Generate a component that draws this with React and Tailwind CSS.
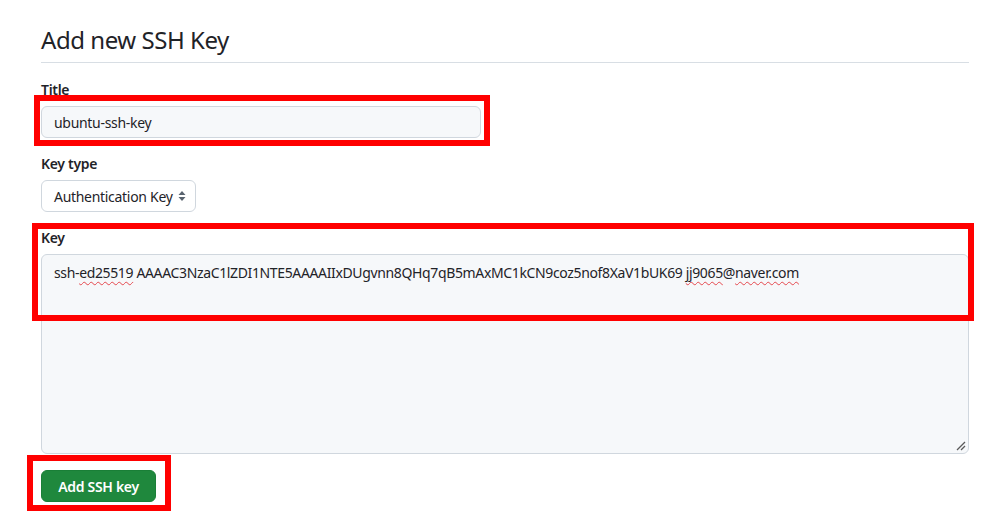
import React from 'react';

function SelectArrows() {
  return (
    <svg width="8" height="12" viewBox="0 0 8 12" className="text-[#59636e] shrink-0">
      <path d="M4 1 L7.5 5 L0.5 5 Z" fill="currentColor" />
      <path d="M4 11 L7.5 7 L0.5 7 Z" fill="currentColor" />
    </svg>
  );
}

function ResizeHandle() {
  return (
    <svg width="10" height="10" viewBox="0 0 10 10" className="absolute right-[2px] bottom-[2px]">
      <path d="M9 1 L1 9" stroke="#5a5a5a" strokeWidth="1.3" />
      <path d="M9 5 L5 9" stroke="#5a5a5a" strokeWidth="1.3" />
    </svg>
  );
}

const Squiggle = ({ children }) => (
  <span className="underline decoration-wavy decoration-[#e5484d] decoration-1 underline-offset-[3px]">
    {children}
  </span>
);

export default function App() {
  return (
    <div
      className="relative w-[997px] h-[525px] bg-white text-[#1f2328] overflow-hidden tracking-[-0.3px]"
      style={{ fontFamily: '"Noto Sans", "Open Sans", sans-serif' }}
    >
      <div className="pl-[41px] pr-[28px] pt-[22px]">
        {/* Subhead */}
        <div className="border-b border-[#d8dee4] pb-[4px]">
          <h2 className="text-[24px] leading-[36px] font-normal tracking-[-0.45px]">Add new SSH Key</h2>
        </div>

        {/* Title */}
        <div className="mt-[16px]">
          <label className="block text-[14px] leading-[21px] font-semibold mb-[6px]">Title</label>
          <div className="w-[440px] h-[32px] rounded-[6px] border border-[#d0d7de] bg-[#f6f8fa] px-[12px] flex items-center text-[14px]">
            ubuntu-ssh-key
          </div>
        </div>

        {/* Key type */}
        <div className="mt-[15px]">
          <label className="block text-[14px] leading-[21px] font-semibold mb-[6px]">Key type</label>
          <div className="w-[155px] h-[32px] rounded-[6px] border border-[#d0d7de] bg-white pl-[12px] pr-[9px] flex items-center justify-between text-[14px]">
            <span>Authentication Key</span>
            <SelectArrows />
          </div>
        </div>

        {/* Key */}
        <div className="mt-[15px]">
          <label className="block text-[14px] leading-[21px] font-semibold mb-[6px]">Key</label>
          <div className="relative w-[928px] h-[200px] rounded-[6px] border border-[#d0d7de] bg-[#f6f8fa] px-[12px] py-[8px] text-[14px] leading-[20px] whitespace-nowrap tracking-[-0.36px]">
            ssh-<Squiggle>ed25519</Squiggle> AAAAC3NzaC1lZDI1NTE5AAAAIIxDUgvnn8QHq7qB5mAxMC1kCN9coz5nof8XaV1bUK69{' '}
            <Squiggle>jj9065</Squiggle>@<Squiggle>naver.com</Squiggle>
            <ResizeHandle />
          </div>
        </div>

        {/* Submit */}
        <div className="mt-[16px]">
          <button className="h-[32px] w-[115px] rounded-[6px] bg-[#1f883d] border border-[#1a7f37] text-white text-[14px] font-semibold flex items-center justify-center">
            Add SSH key
          </button>
        </div>
      </div>

      {/* Red annotation boxes */}
      <div className="absolute left-[34px] top-[95px] w-[456px] h-[51px] border-[6px] border-[#ff0000]" />
      <div className="absolute left-[32px] top-[223px] w-[942px] h-[98px] border-[6px] border-[#ff0000]" />
      <div className="absolute left-[27px] top-[455px] w-[144px] h-[56px] border-[6px] border-[#ff0000]" />
    </div>
  );
}
